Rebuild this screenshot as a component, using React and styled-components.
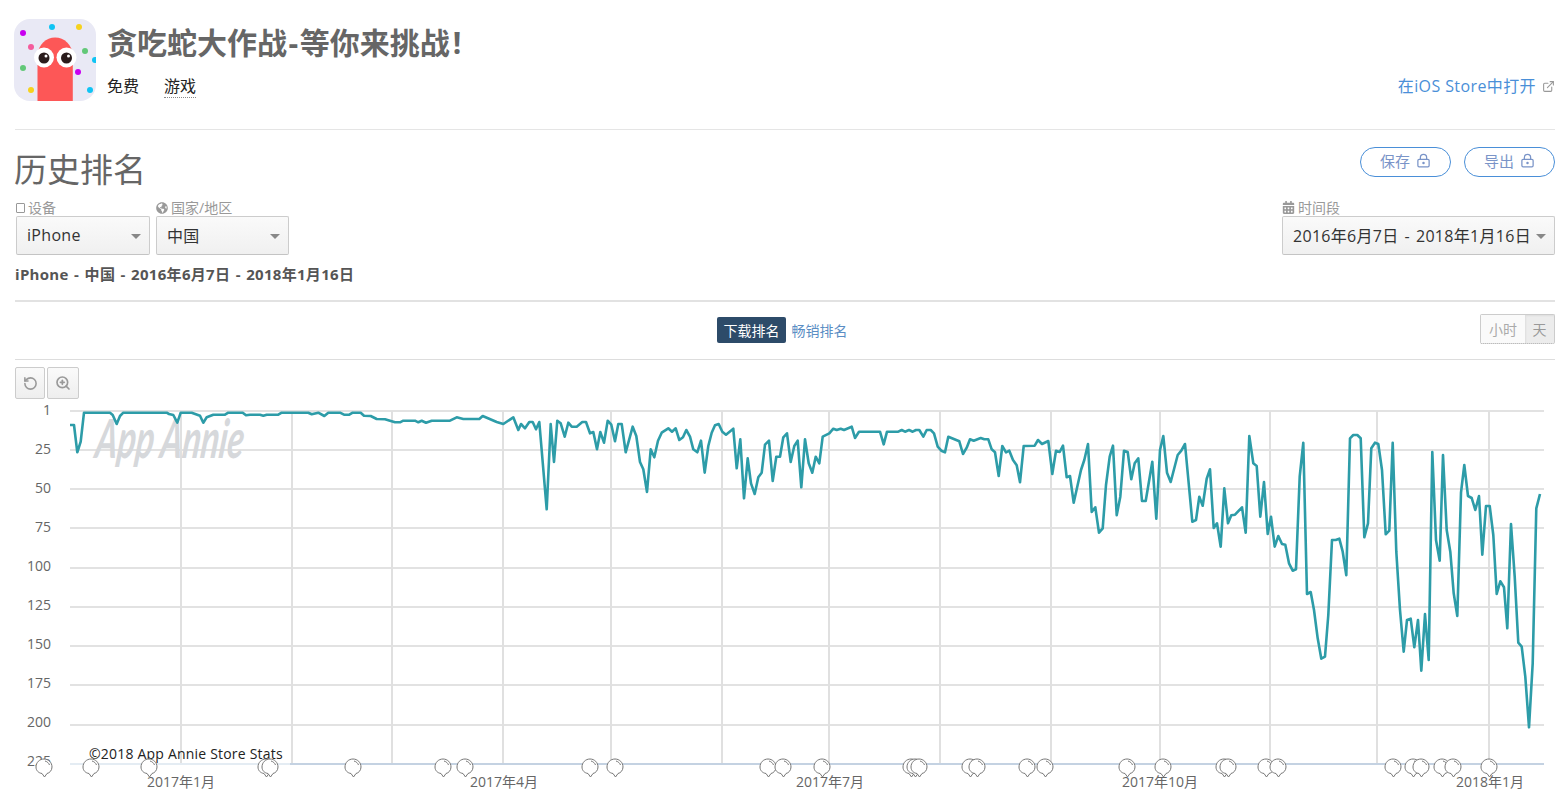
import React from 'react'
import styled, { createGlobalStyle } from 'styled-components'
import { ExternalLink, LockKeyhole, RotateCcw, ZoomIn } from 'lucide-react'
import { FaCalendarAlt, FaGlobeAmericas } from 'react-icons/fa'

const FONT = '"Open Sans", "Noto Sans CJK SC", sans-serif'

const rankLine = `70,425 74,425 77.3,452.3 80.7,441.7 84,412.7 110,412.7 112.7,415 116.7,424 120,416 123.3,412.7 166.7,412.7 169,414 173.3,415 177.3,422.7 180.7,412.7 191.7,412.7 200,415.7 203.3,422.7 206.7,417.3 213.3,414.7 225,414.7 228.3,412.7 242.7,412.7 246,415.3 250,414.7 260,414.7 263.3,415.7 266.7,414.7 278.3,414.7 281.7,412.7 308.3,412.7 311.7,414.3 318.3,412.7 324.3,416 328.3,412.7 340,412.7 344,414.7 349.3,414.7 352.7,412.7 360.7,412.7 364,415.7 370.7,416 376.7,419 385,419.3 395,422.3 400,422.3 403.3,420.7 415,420.7 418.3,422.3 421.7,420.7 426,422.7 431.7,420.7 450,420.7 456.7,417.3 463.3,419 479.3,419 482.7,416 496.7,422 503.3,424 513.3,417.3 518.3,430 521,424 525,428.3 529.3,422 532.7,422 536,429.3 539.3,422 546.7,509.3 550.7,424 554,462 557.3,420.7 560.7,423.3 564.7,436.7 568.3,422.7 571.7,426.7 576.7,426.7 582.3,422 586,422 590,433.3 593.3,432 597,449.3 600.3,432 604,442.7 607.7,420.7 611.3,424.7 615,441.3 618.3,424 621.7,424 625.7,452.3 632.7,426.7 636.3,436 640,462 643.3,469.3 647,492 650.7,449.3 654.3,457.3 658,440.7 661.7,432.7 668.3,428.3 672,431.7 675.7,428.3 679.3,440 683,437.3 686.3,430 690,436.7 693.3,449.3 697.3,452.3 701,440.7 704.7,472.7 708.3,446 711.7,432.7 715,425.3 718.7,424 722.3,431.7 726,434.7 733.3,428.7 736.7,468.3 740.3,439.3 744,498.3 747.7,458.3 751,483.3 754.7,494 758.3,477.3 761.7,472.7 765,444.7 769,440.7 772.7,481 776.3,456.7 780,456.7 783.3,437.3 787,433.3 790.7,462 794.3,446 797.7,440.7 801.3,487.3 805,439.3 808.7,463.3 812.3,472.7 815.7,456.7 819.3,463.3 822.7,436.7 829.3,433.3 833.3,428.7 836.7,430 840.7,428.7 844,430 851.7,426.7 855,438 859,431.7 880,431.7 883.7,444.3 887,431.7 898.3,431.7 901.7,430 905,431.7 909,430 912.7,431.7 916,430 919.3,430 923.3,436.7 926.7,430 930.7,430 934,433.3 937.7,446.7 941.3,450.7 945,452.3 948.3,436.7 959.3,441.3 963,454 966.7,447.7 970,439.3 973.7,440.7 980.7,438 984.3,439.3 988.3,439.3 991.7,449.3 995,452.3 998.7,476 1002.3,446 1006,452.3 1009.3,450.7 1013,460 1016.7,465.3 1020,482.3 1023.7,446 1034.7,445.7 1038,440 1042,444 1048.3,441 1052.3,474 1056,450.7 1059.7,452 1063,445.7 1066.7,477.3 1070,476 1073.7,502.7 1081,470 1084.3,460 1088,444 1091.7,512 1095.3,507.3 1099,532.7 1102.7,528.3 1106,485 1109.7,456.7 1113,445.7 1116.7,515.3 1120.3,496.7 1124,450.7 1127.7,452 1131.3,479.3 1134.7,463.3 1138.3,458.3 1142,501 1145.7,501 1152.3,461.7 1156.3,518.7 1160,450 1163.3,436 1167,472.7 1170.7,482 1177.7,455 1181.3,450.7 1185,444 1192.3,521.7 1196,520 1199.3,496.7 1202.7,505.7 1206.7,478.7 1210,469.3 1213.7,528 1217,523.3 1220.7,546.7 1224.3,488.3 1228,523.3 1231.3,515.3 1235,514.7 1242,507.3 1245.7,532.7 1249.3,436 1253.3,463.3 1256.7,466 1260.3,516.7 1264,482 1267.7,534 1271,516.7 1274.7,546.7 1278.3,536 1282,544 1285.3,544.7 1289,563.3 1292.7,570.7 1296,569.3 1299.7,476.7 1303.3,442.7 1307,594 1310.7,592 1314,610 1317.7,638.3 1321.3,658.7 1325,656.7 1328.3,615 1332,540 1335.7,540 1339.3,538.7 1342.7,551.7 1346.3,575.3 1350,438.3 1353.3,435 1357.3,435 1360.7,438.3 1364.3,537.3 1368,523.3 1371.3,448.3 1375,442.7 1378.3,444 1382,470 1385.7,534.3 1389.3,530.7 1392.7,442.7 1396.3,551.7 1400,610 1403.7,651.7 1407,620 1410.7,618.7 1414.3,647.3 1418,620 1421.3,670.7 1425,614 1428.7,660 1432.3,452 1436,540 1439.7,560.7 1443,455 1446.7,530 1450.3,551.7 1453.7,593.3 1457.3,616 1461,492.7 1464.3,465 1468,496 1471.7,498 1475.3,510 1479,496 1482.3,554.7 1486,506 1489.7,506 1493.3,535 1496.7,594 1500.3,581.3 1504,587.3 1507.3,628.3 1511,524 1514.7,576.7 1518.3,642.7 1521.7,646.7 1525.3,676.7 1529,727.3 1532.7,663.3 1536.3,508.3 1540,494`

const rows = [
  ['1', 411], ['25', 450], ['50', 489], ['75', 528], ['100', 568],
  ['125', 607], ['150', 646], ['175', 685], ['200', 725], ['225', 764],
]
const columns = [181, 292, 392, 503, 611, 722, 829, 940, 1051, 1160, 1270, 1377, 1489]
const months = [
  ['2017年1月', 181], ['2017年4月', 504], ['2017年7月', 830],
  ['2017年10月', 1160], ['2018年1月', 1490],
]
const flags = [
  44, 91, 149, 266, 270, 353, 443, 465, 590, 615, 768, 783, 822, 911, 915, 919, 970, 977,
  1027, 1045, 1127, 1163, 1224, 1228, 1266, 1278, 1393, 1413, 1421, 1442, 1453, 1489,
]
const dots = [
  [23, 33, '#c800f0'], [52, 27, '#10c4f4'], [79, 27, '#f6d21e'], [31, 47, '#f45c9c'],
  [85, 51, '#62c878'], [95, 60, '#10c4f4'], [23, 68, '#62c878'], [78, 72, '#c800f0'],
  [31, 90, '#f6d21e'], [90, 90, '#10c4f4'],
]

const GlobalStyle = createGlobalStyle`
  html, body {
    margin: 0;
    overflow: hidden;
    background: #fff;
    font-family: ${FONT};
  }
`

const Page = styled.div`
  width: 1540px;
  height: 802px;
  padding: 0 12px 0 15px;
  overflow: hidden;
`

const AppHeader = styled.header`
  display: flex;
  height: 110px;
  padding-top: 19px;
  border-bottom: 1px solid #e5e5e5;
`

const Logo = styled.svg`
  width: 83px;
  height: 83px;
  margin: 0 10px 0 -1px;
  flex: none;
`

const AppInfo = styled.div`
  flex: 1;
`

const AppName = styled.h1`
  margin: 4px 0 0;
  font-size: 30px;
  line-height: 40px;
  font-weight: 700;
  color: #666;
`

const Hyphen = styled.span`
  margin: 0 1.5px;
`

const Bang = styled.span`
  margin-left: 3px;
`

const Meta = styled.div`
  display: flex;
  gap: 25px;
  margin-top: 12px;
  font-size: 16px;
  line-height: 22px;
  color: #222;
`

const MetaItem = styled.span`
  border-bottom: ${(p) => (p.$dotted ? '1px dotted #888' : '1px solid transparent')};
`

const StoreLink = styled.a`
  display: flex;
  align-items: center;
  gap: 6px;
  align-self: flex-start;
  margin-top: 56px;
  font-size: 16px;
  line-height: 22px;
  letter-spacing: 0.4px;
  color: #4a8fd8;
  svg {
    color: #999;
  }
`

const TitleRow = styled.div`
  display: flex;
  justify-content: space-between;
  align-items: flex-start;
  height: 70px;
`

const Title = styled.h2`
  margin: 18px 0 0 -1px;
  font-size: 33px;
  line-height: 44px;
  font-weight: 400;
  color: #666;
`

const PillGroup = styled.div`
  display: flex;
  gap: 13px;
  margin-top: 17px;
`

const Pill = styled.button`
  display: flex;
  align-items: center;
  justify-content: center;
  gap: 6px;
  box-sizing: border-box;
  width: 91px;
  height: 30px;
  padding: 0 0 3px;
  border: 1px solid #4a8fd8;
  border-radius: 15px;
  background: #fff;
  font-family: ${FONT};
  font-size: 15px;
  color: #7a94c8;
`

const Filters = styled.div`
  display: flex;
  justify-content: space-between;
  padding-left: 1px;
`

const FilterGroup = styled.div`
  display: flex;
  gap: 6px;
`

const Field = styled.div`
  display: flex;
  flex-direction: column;
`

const FieldLabel = styled.label`
  display: flex;
  align-items: center;
  gap: 3px;
  box-sizing: border-box;
  height: 16px;
  padding-bottom: 1px;
  font-size: 14px;
  line-height: 14px;
  color: #999;
  svg {
    color: #999;
  }
`

const DeviceIcon = styled.span`
  width: 7px;
  height: 8px;
  border: 1px solid #999;
  border-radius: 1px;
`

const Select = styled.div`
  display: flex;
  align-items: center;
  justify-content: space-between;
  box-sizing: border-box;
  width: ${(p) => p.$width}px;
  height: 39px;
  padding: 0 8px 1px 10px;
  border: 1px solid #ccc;
  border-bottom-color: #c4c4c4;
  border-radius: 2px;
  background: linear-gradient(#fafafa, #f0f0f0);
  font-size: 16px;
  letter-spacing: 0.3px;
  word-spacing: 1.5px;
  color: #333;
`

const Caret = styled.span`
  width: 0;
  height: 0;
  margin-top: 2px;
  border-left: 5px solid transparent;
  border-right: 5px solid transparent;
  border-top: 5px solid #888;
`

const Summary = styled.div`
  margin-top: 8px;
  height: 37px;
  font-size: 15px;
  line-height: 22px;
  font-weight: 700;
  letter-spacing: 0.3px;
  word-spacing: 1.2px;
  color: #555;
  border-bottom: 2px solid #e2e2e2;
`

const TabBar = styled.div`
  display: flex;
  justify-content: center;
  align-items: center;
  position: relative;
  height: 58px;
  gap: 6px;
  border-bottom: 1px solid #ddd;
  padding: 0 6px 1px 0;
  box-sizing: border-box;
`

const Tab = styled.a`
  display: flex;
  align-items: center;
  justify-content: center;
  height: 26px;
  padding: ${(p) => (p.$active ? '0 6px 0 7px' : '0')};
  border-radius: 2px;
  font-size: 14px;
  background: ${(p) => (p.$active ? '#2d4b69' : 'transparent')};
  color: ${(p) => (p.$active ? '#fff' : '#5b8ec4')};
`

const Toggle = styled.div`
  display: flex;
  position: absolute;
  right: 0;
  top: 12px;
  height: 30px;
  box-sizing: border-box;
  border: 1px solid #ccc;
  border-bottom: 1px dotted #999;
  border-radius: 2px;
  font-size: 14px;
  color: #aaa;
`

const ToggleItem = styled.span`
  display: flex;
  align-items: center;
  justify-content: center;
  width: ${(p) => p.$width}px;
  background: ${(p) => (p.$on ? '#ececec' : '#fafafa')};
  box-shadow: ${(p) => (p.$on ? 'inset 1px 1px 2px #ddd' : 'none')};
  color: ${(p) => (p.$on ? '#999' : '#aaa')};
`

const ToolRow = styled.div`
  display: flex;
  gap: 2px;
  margin-top: 7px;
  height: 33px;
`

const ToolButton = styled.button`
  display: flex;
  align-items: center;
  justify-content: center;
  box-sizing: border-box;
  width: ${(p) => p.$width}px;
  height: 32px;
  padding: 0;
  border: 1px solid #ccc;
  border-radius: 2px;
  background: linear-gradient(#fafafa, #eee);
  color: #999;
`

const ChartSvg = styled.svg`
  display: block;
  width: 1552px;
  height: 402px;
`

const GridLine = styled.line`
  stroke: ${(p) => (p.$vertical ? '#e0e0e0' : '#d9d9d9')};
  stroke-width: ${(p) => (p.$vertical ? 2 : 1.5)};
`

const AxisLine = styled.line`
  stroke: ${(p) => (p.$faint ? '#e4ecf3' : '#c4d2e2')};
  stroke-width: 2;
`

const RankPath = styled.polyline`
  fill: none;
  stroke: #2d9ca8;
  stroke-width: 2.6;
  stroke-linejoin: round;
`

const AxisText = styled.text`
  font-family: ${FONT};
  font-size: 14px;
  fill: #666;
`

const Credit = styled.text`
  font-family: ${FONT};
  font-size: 14px;
  letter-spacing: 0.2px;
  fill: #222;
`

const Watermark = styled.text`
  font-family: Lato, sans-serif;
  font-size: 47px;
  font-weight: 700;
  font-style: italic;
  fill: #d6d8db;
`

const FlagBody = styled.path`
  fill: ${(p) => (p.$open ? 'none' : '#fff')};
  stroke: #777;
  stroke-width: 1;
`

const Flag = ({ x }) => (
  <g transform={`translate(${x} 767)`}>
    <FlagBody d="M0.500 10L-2 6.500C-5.500 6-8 3.500-8 0C-8-4.500-4.500-8 0-8C4.500-8 8-4.500 8 0C8 3.500 5.500 6 3 6.500Z" />
    <FlagBody $open d="M1-6C3-5.500 4.800-4 5.500-2" />
  </g>
)

const AppLogo = () => (
  <Logo viewBox="14 19 83 83">
    <defs>
      <clipPath id="logo-clip">
        <rect x="14" y="19" width="82" height="82" rx="16" />
      </clipPath>
    </defs>
    <g clipPath="url(#logo-clip)">
      <rect x="14" y="19" width="82" height="82" fill="#e9e9f5" />
      {dots.map(([cx, cy, color]) => (
        <circle key={`${cx}-${cy}`} cx={cx} cy={cy} r="3" fill={color} />
      ))}
      <path d="M37.500 101V55A17.700 19 0 0 1 72.800 55V101Z" fill="#fd5757" />
      <circle cx="44" cy="57.500" r="10" fill="#fff" />
      <circle cx="66.500" cy="57.500" r="10" fill="#fff" />
      <circle cx="44" cy="58" r="5.500" fill="#2a1c1c" />
      <circle cx="66.500" cy="58" r="5.500" fill="#2a1c1c" />
      <circle cx="46" cy="56" r="1.500" fill="#fff" />
      <circle cx="68.500" cy="56" r="1.500" fill="#fff" />
    </g>
  </Logo>
)

const RankChart = () => (
  <ChartSvg viewBox="15 400 1552 402">
    {rows.slice(0, -1).map(([label, y]) => (
      <GridLine key={label} x1="70" x2="1544" y1={y} y2={y} />
    ))}
    {columns.map((x) => (
      <GridLine key={x} $vertical x1={x} x2={x} y1="411" y2="764" />
    ))}
    <AxisLine $faint x1="70" x2="290" y1="764" y2="764" />
    <AxisLine x1="290" x2="1544" y1="764" y2="764" />
    <Watermark transform="translate(94 458) skewX(-7) scale(0.72 1.15)">App Annie</Watermark>
    <RankPath points={rankLine} />
    {rows.map(([label], i) => (
      <AxisText key={label} x="51" y={415 + i * 39.05} textAnchor="end">{label}</AxisText>
    ))}
    {months.map(([label, x]) => (
      <AxisText key={label} x={x} y="787" textAnchor="middle">{label}</AxisText>
    ))}
    <Credit x="89" y="759">©2018 App Annie Store Stats</Credit>
    {flags.map((x, i) => (
      <Flag key={`${x}-${i}`} x={x} />
    ))}
  </ChartSvg>
)

const App = () => {
  return (
    <Page>
      <GlobalStyle />
      <AppHeader>
        <AppLogo />
        <AppInfo>
          <AppName>贪吃蛇大作战<Hyphen>-</Hyphen>等你来挑战<Bang>!</Bang></AppName>
          <Meta>
            <MetaItem>免费</MetaItem>
            <MetaItem $dotted>游戏</MetaItem>
          </Meta>
        </AppInfo>
        <StoreLink>
          在iOS Store中打开
          <ExternalLink size={13} />
        </StoreLink>
      </AppHeader>

      <TitleRow>
        <Title>历史排名</Title>
        <PillGroup>
          <Pill>保存 <LockKeyhole size={15} /></Pill>
          <Pill>导出 <LockKeyhole size={15} /></Pill>
        </PillGroup>
      </TitleRow>

      <Filters>
        <FilterGroup>
          <Field>
            <FieldLabel><DeviceIcon />设备</FieldLabel>
            <Select $width={134}>iPhone<Caret /></Select>
          </Field>
          <Field>
            <FieldLabel><FaGlobeAmericas size={12} />国家/地区</FieldLabel>
            <Select $width={133}>中国<Caret /></Select>
          </Field>
        </FilterGroup>
        <Field>
          <FieldLabel><FaCalendarAlt size={13} />时间段</FieldLabel>
          <Select $width={273}>2016年6月7日 - 2018年1月16日<Caret /></Select>
        </Field>
      </Filters>

      <Summary>iPhone - 中国 - 2016年6月7日 - 2018年1月16日</Summary>

      <TabBar>
        <Tab $active>下载排名</Tab>
        <Tab>畅销排名</Tab>
        <Toggle>
          <ToggleItem $width={44}>小时</ToggleItem>
          <ToggleItem $width={29} $on>天</ToggleItem>
        </Toggle>
      </TabBar>

      <ToolRow>
        <ToolButton $width={30}><RotateCcw size={15} strokeWidth={2.5} /></ToolButton>
        <ToolButton $width={32}><ZoomIn size={16} strokeWidth={2.5} /></ToolButton>
      </ToolRow>

      <RankChart />
    </Page>
  )
}

export default App
